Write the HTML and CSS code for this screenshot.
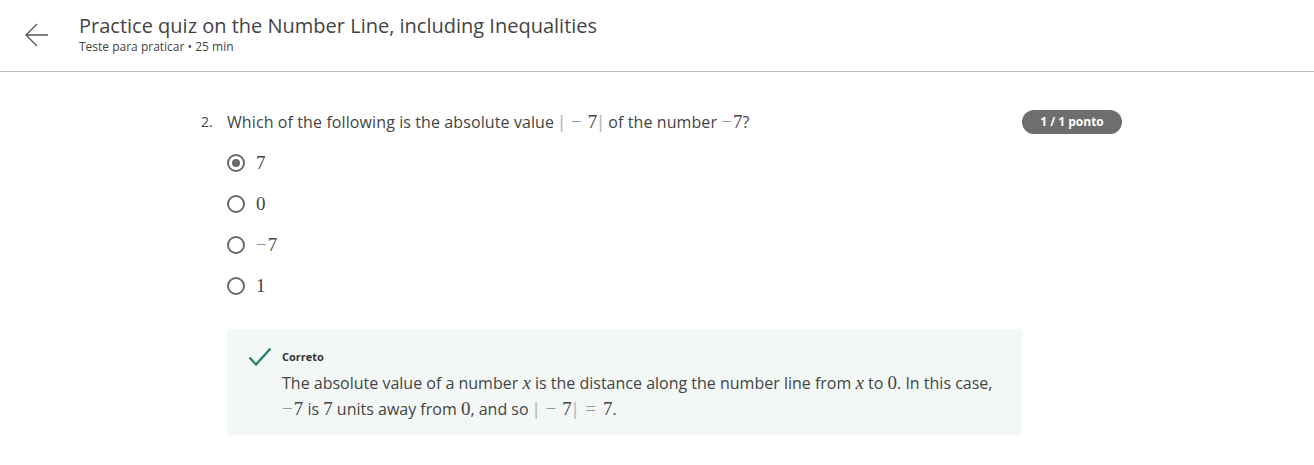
FILE: index.html
```html
<!DOCTYPE html>
<html>
<head>
<meta charset="utf-8">
<link rel="stylesheet" href="styles.css">
</head>
<body>
<header class="top">
  <div class="back">
    <svg width="26" height="26" viewBox="0 0 26 26"><path d="M24 13H2M13 2L2 13l11 11" fill="none" stroke="#555" stroke-width="1.3"/></svg>
  </div>
  <div class="titles">
    <h1 class="title">Practice quiz on the Number Line, including Inequalities</h1>
    <div class="sub">Teste para praticar • 25 min</div>
  </div>
</header>
<main class="quiz">
  <div class="qrow">
    <div class="num">2.</div>
    <div class="qbody">
      <div class="qhead">
        <div class="qtext">Which of the following is the absolute value <span class="m"><span class="bar">|</span><span class="mi">−</span>7<span class="bar">|</span></span> of the number <span class="m"><span class="neg">−</span>7</span>?</div>
        <div class="badge">1 / 1 ponto</div>
      </div>
      <ul class="opts">
        <li class="opt"><span class="radio on"></span><span class="m">7</span></li>
        <li class="opt"><span class="radio"></span><span class="m">0</span></li>
        <li class="opt"><span class="radio"></span><span class="m"><span class="neg">−</span>7</span></li>
        <li class="opt"><span class="radio"></span><span class="m">1</span></li>
      </ul>
      <div class="fb">
        <svg class="check" width="24" height="20" viewBox="0 0 24 20"><path d="M1.5 10.5l6.5 7L22.5 1.5" fill="none" stroke="#1f8354" stroke-width="2.2"/></svg>
        <div class="fbbody">
          <div class="fbtitle">Correto</div>
          <p class="fbtext">The absolute value of a number <span class="m i">x</span> is the distance along the number line from <span class="m i">x</span> to <span class="m">0</span>. In this case, <span class="m"><span class="neg">−</span>7</span> is <span class="m">7</span> units away from <span class="m">0</span>, and so <span class="m"><span class="bar">|</span><span class="mi">−</span>7<span class="bar">|</span><span class="mi eq">=</span>7</span>.</p>
        </div>
      </div>
    </div>
  </div>
</main>
</body>
</html>
```
FILE: styles.css
```css
* { box-sizing: border-box; }
body {
  margin: 0;
  font-family: "Open Sans", "Liberation Sans", sans-serif;
  color: #333;
  background: #fff;
}
.top {
  display: flex;
  align-items: flex-start;
  height: 72px;
  border-bottom: 1px solid #bdbdbd;
  padding: 14px 0 0 24px;
}
.back { width: 55px; padding-top: 8px; }
.back svg { display: block; }
.titles { display: flex; flex-direction: column; }
.title {
  margin: 0;
  font-size: 20px;
  font-weight: 400;
  line-height: 24px;
  color: #444;
}
.sub {
  font-size: 12px;
  line-height: 16px;
  color: #444;
  margin-top: 1px;
}
.quiz { padding: 38px 0 0 201px; }
.qrow { display: flex; }
.num { width: 26px; font-size: 14px; line-height: 24px; color: #444; }
.qbody { width: 895px; }
.qhead {
  display: flex;
  justify-content: space-between;
  align-items: center;
  height: 24px;
}
.qtext { font-size: 16px; color: #444; letter-spacing: 0.1px; }
.m {
  font-family: "Liberation Serif", "DejaVu Serif", serif;
  font-size: 19px;
  color: #444;
  letter-spacing: 0;
}
.m.i { font-style: italic; }
.neg { color: #999; margin-right: 1px; }
.mi { color: #999; margin: 0 6px 0 6px; }
.mi.eq { margin: 0 7px; }
.bar { color: #bbb; font-family: "Liberation Sans", sans-serif; font-weight: 300; font-size: 18px; margin: 0 1px; }
.badge {
  background: #6e6e6e;
  color: #fff;
  font-size: 12px;
  font-weight: 700;
  border-radius: 12px;
  width: 100px;
  height: 24px;
  line-height: 24px;
  text-align: center;
}
.opts { list-style: none; margin: 8px 0 0; padding: 0; }
.opt { display: flex; align-items: center; height: 41px; }
.radio {
  width: 18px; height: 18px;
  border: 2px solid #6a6a6a;
  border-radius: 50%;
  margin-right: 11px;
  position: relative;
}
.radio.on::after {
  content: "";
  position: absolute;
  left: 3px; top: 3px;
  width: 8px; height: 8px;
  border-radius: 50%;
  background: #6a6a6a;
}
.fb {
  margin-top: 23px;
  width: 795px;
  background: #f3f8f6;
  display: flex;
  padding: 18px 20px 13px 21px;
}
.check { margin-right: 10px; flex: none; }
.fbtitle { font-size: 11px; font-weight: 700; color: #333; line-height: 20px; }
.fbtext {
  margin: 3px 0 0;
  font-size: 16px;
  line-height: 25px;
  color: #444;
}
```
